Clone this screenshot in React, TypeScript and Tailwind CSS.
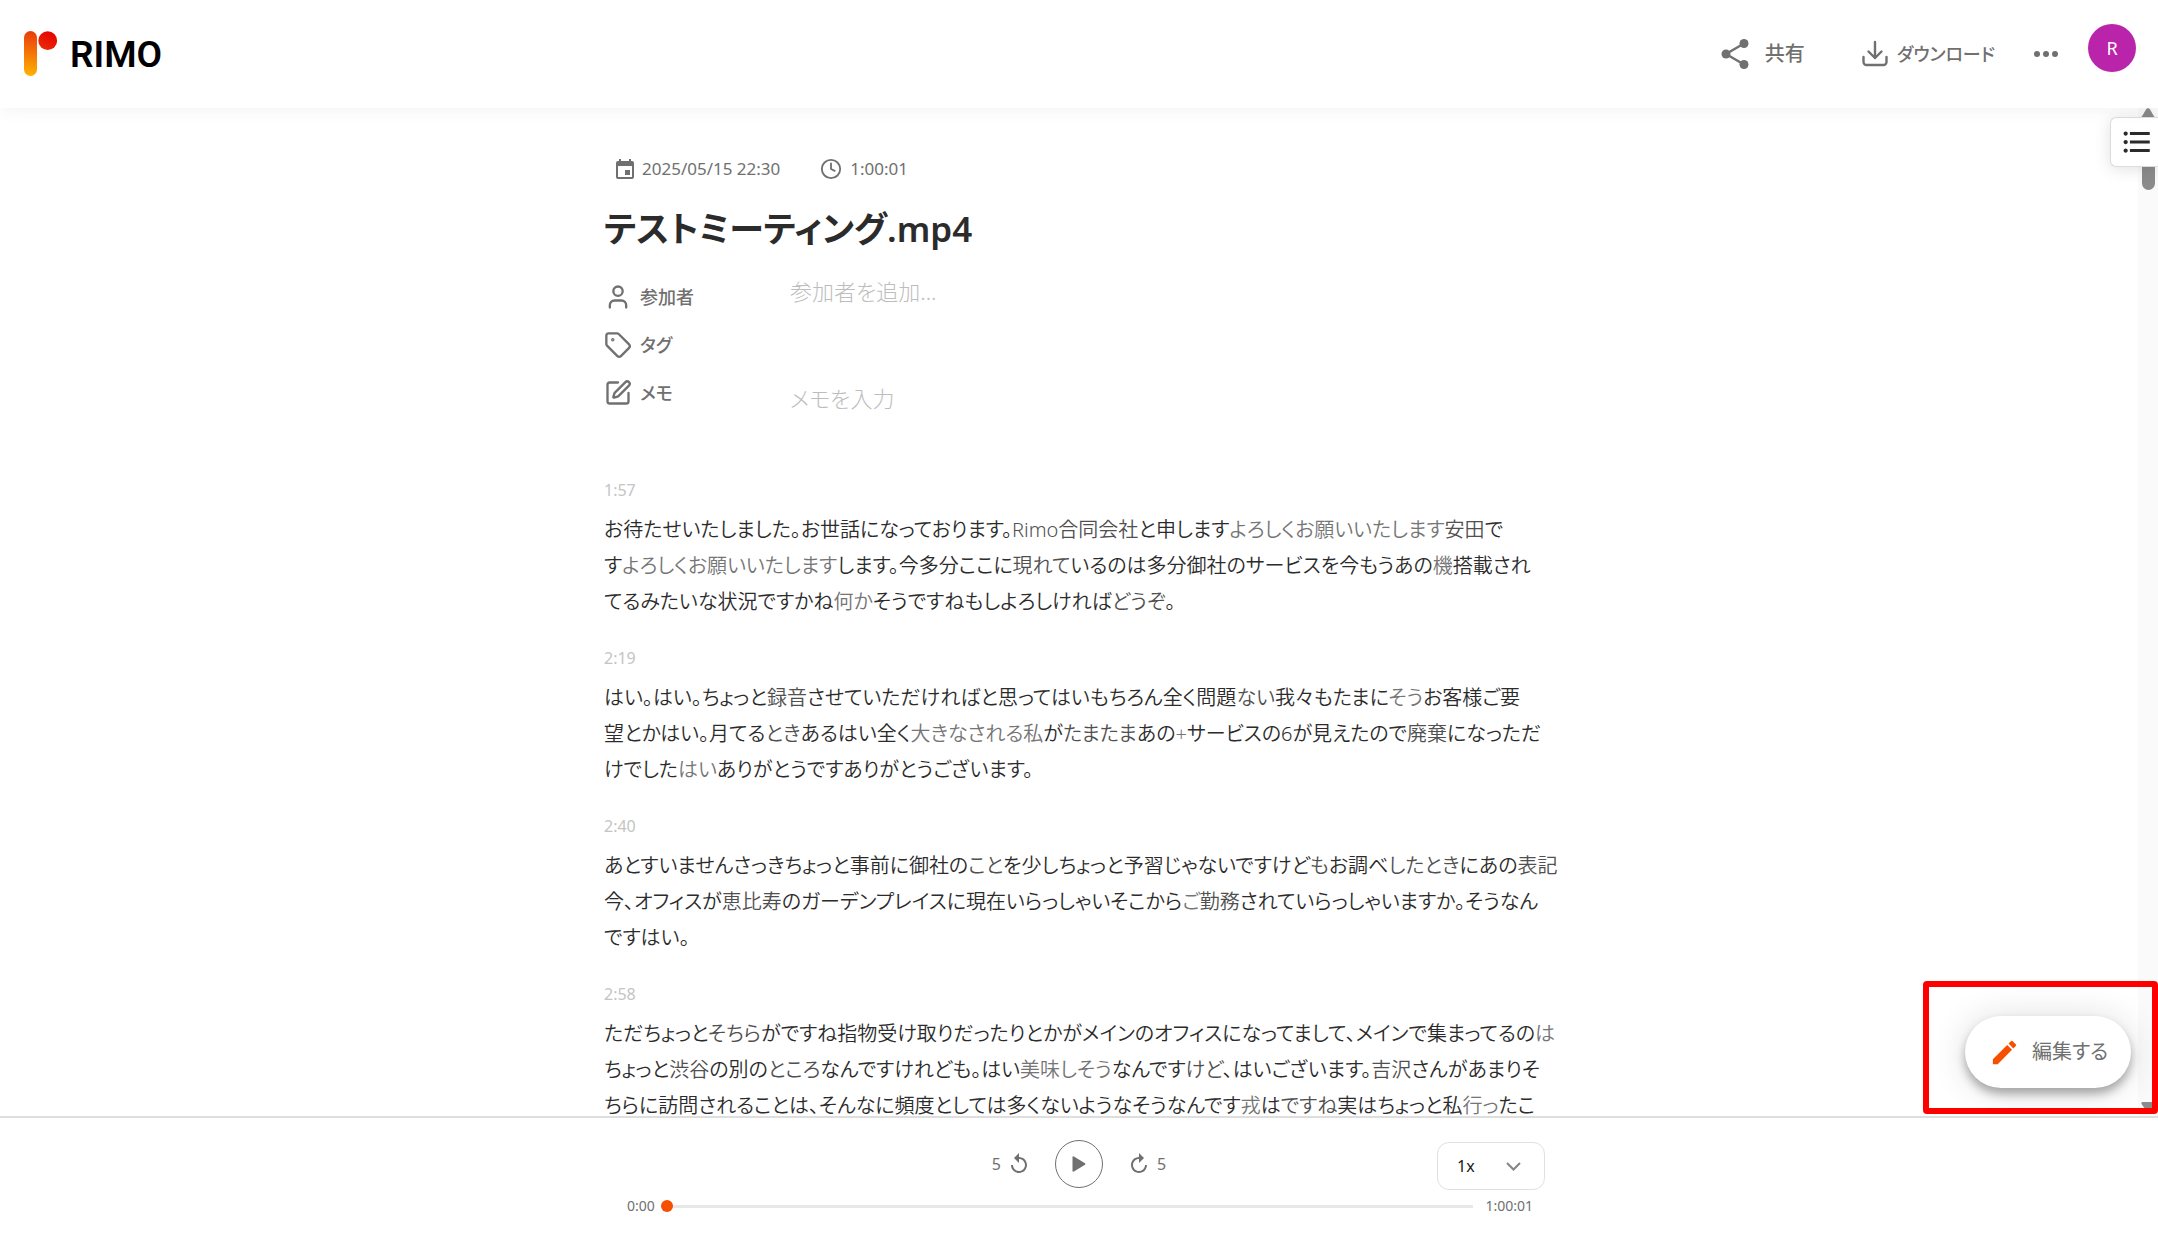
import React from "react";
import { Clock, SquarePen, Tag, User } from "lucide-react";
import { MdEdit, MdFormatListBulleted, MdReplay } from "react-icons/md";

/* Transcript markup: plain text is high confidence, {..} medium, <..> low. */
const transcript = [
  {
    time: "1:57",
    lines: [
      "お待たせいたしました。お世話になっております。{Rimo合同会社}と申します<よろしくお願いいたします>{安田}で",
      "す<よろしくお願いいたします>します。今多分ここに{現れて}いるのは多分御社のサービスを今もうあの<機>搭載され",
      "てるみたいな状況ですかね<何か>そうですねもしよろしければ{どうぞ}。",
    ],
  },
  {
    time: "2:19",
    lines: [
      "はい。はい。ちょっと{録音}させていただければと思ってはいもちろん全く問題{ない}我々もたまに<そう>お客様ご要",
      "望とかはい。月てる{とき}あるはい全く<大きなされる私>が{たまたま}あの<+>サービスの6が見えたので{廃棄}になっただ",
      "けでした<はい>ありがとうですありがとうございます。",
    ],
  },
  {
    time: "2:40",
    lines: [
      "あとすいませんさっきちょっと事前に御社の{こと}を少しちょっと予習じゃないですけど{も}お調べ{したとき}にあの{表記}",
      "今、オフィスが{恵比寿}のガーデンプレイスに現在いらっしゃいそこから<ご>{勤務}されていらっしゃいますか。そうなん",
      "ですはい。",
    ],
  },
  {
    time: "2:58",
    lines: [
      "ただちょっと{そちら}がですね指物受け取りだったりとかがメインのオフィスになってまして、メインで集まってるの<は>",
      "ちょっと{渋谷}の別の{ところ}なんですけれども。はい<美味しそう>なんです{けど}、はいございます。{吉沢}さんがあまりそ",
      "ちらに訪問されることは、そんなに頻度としては多くないようなそうなんです<戎>は{ですね}実はちょっと私<行っ>たこ",
    ],
  },
];

function TranscriptLine({ text }: { text: string }) {
  const parts = text.split(/(\{[^}]*\}|<[^>]*>)/).filter(Boolean);
  return (
    <span className="block whitespace-nowrap">
      {parts.map((part, i) => {
        if (part[0] === "{")
          return <span key={i} className="text-[#505050]">{part.slice(1, -1)}</span>;
        if (part[0] === "<")
          return <span key={i} className="text-[#757575]">{part.slice(1, -1)}</span>;
        return <span key={i}>{part}</span>;
      })}
    </span>
  );
}

function Logo() {
  return (
    <a href="#home" aria-label="RIMO" className="flex items-center gap-3 text-black">
      <svg width="34" height="46" viewBox="0 0 34 46" aria-hidden="true">
        <defs>
          <linearGradient id="stem" gradientUnits="userSpaceOnUse" x1="10" y1="0" x2="3" y2="46">
            <stop offset="0" stopColor="#e93a0c" />
            <stop offset="1" stopColor="#ffb600" />
          </linearGradient>
          <linearGradient id="dot" x1="0.8" y1="0" x2="0.2" y2="1">
            <stop offset="0" stopColor="#e60000" />
            <stop offset="1" stopColor="#ea2c08" />
          </linearGradient>
        </defs>
        <rect x="0" y="0" width="13" height="45" rx="6.500" fill="url(#stem)" />
        <circle cx="23.700" cy="9.700" r="9.400" fill="url(#dot)" />
      </svg>
      <span className="font-[Roboto] text-[37px] leading-none font-semibold">RIMO</span>
    </a>
  );
}

function ShareIcon() {
  return (
    <svg width="28" height="30" viewBox="0 0 28 30" fill="currentColor" aria-hidden="true">
      <path d="M23 4.500 5 15l18 10.500" fill="none" stroke="currentColor" strokeWidth="2.400" />
      <circle cx="23" cy="4.500" r="4.500" />
      <circle cx="5" cy="15" r="4.500" />
      <circle cx="23" cy="25.500" r="4.500" />
    </svg>
  );
}

function CalendarIcon() {
  return (
    <svg width="18" height="20" viewBox="0 0 18 20" fill="currentColor" aria-hidden="true">
      <path fillRule="evenodd" d="M3 0h2v2h8V0h2v2h1a2 2 0 0 1 2 2v14a2 2 0 0 1-2 2H2a2 2 0 0 1-2-2V4a2 2 0 0 1 2-2h1zM2 7v11h14V7z" />
      <path d="M9 11h5v5H9z" />
    </svg>
  );
}

export default function App() {
  return (
    <div className="flex h-screen flex-col overflow-hidden bg-white font-['Noto_Sans','Noto_Sans_CJK_JP',sans-serif] text-[#2b2b2b] [font-feature-settings:'palt']">
      <header className="relative z-10 flex h-[108px] shrink-0 items-center justify-between bg-white pr-[22px] pl-6 text-[#707070] shadow-[0_2px_16px_rgba(0,0,0,0.05)]">
        <Logo />
        <div className="flex items-center">
          <button type="button" className="flex items-center gap-4 text-xl font-medium">
            <ShareIcon />
            <span>共有</span>
          </button>
          <button type="button" className="ml-14 flex items-center gap-2 text-lg font-medium">
            <svg width="28" height="28" viewBox="0 0 28 28" fill="none" stroke="currentColor" strokeWidth="2.400" strokeLinecap="round" strokeLinejoin="round" aria-hidden="true">
              <path d="M14 2v16M7.500 11.500 14 18l6.500-6.500M2.500 17v5a3 3 0 0 0 3 3h17a3 3 0 0 0 3-3v-5" />
            </svg>
            <span>ダウンロード</span>
          </button>
          <button type="button" aria-label="その他" className="ml-[38px]">
            <svg width="26" height="6" viewBox="0 0 26 6" fill="currentColor" aria-hidden="true">
              <circle cx="4" cy="3" r="3" />
              <circle cx="13" cy="3" r="3" />
              <circle cx="22" cy="3" r="3" />
            </svg>
          </button>
          <button type="button" className="mb-3 ml-[29px] flex size-12 items-center justify-center rounded-full bg-[#b924ab] text-lg text-white">
            R
          </button>
        </div>
      </header>

      <main className="relative min-h-0 flex-1 overflow-hidden pr-5">
        <div className="mx-auto max-w-[930px] pt-[49px]">
          <div className="flex h-6 items-center text-[17px] text-[#707070]">
            <span className="ml-3 flex items-center gap-2">
              <CalendarIcon />
              2025/05/15 22:30
            </span>
            <span className="ml-10 flex items-center gap-2">
              <Clock size={22} strokeWidth={2} />
              1:00:01
            </span>
          </div>
          <h1 className="mt-6 text-[35px] leading-[48px] font-semibold">テストミーティング.mp4</h1>

          <div className="mt-5 text-lg text-[#707070]">
            <div className="flex h-12 items-center">
              <label htmlFor="members" className="flex w-[186px] items-center gap-2 font-medium">
                <User size={28} strokeWidth={2} />
                参加者
              </label>
              <input id="members" placeholder="参加者を追加..." className="mb-3 min-w-0 flex-1 text-[22px] font-light text-[#2b2b2b] outline-none placeholder:text-[#bdbdbd]" />
            </div>
            <div className="flex h-12 items-center gap-2 font-medium">
              <Tag size={28} strokeWidth={2} />
              タグ
            </div>
            <div className="flex h-12 items-center">
              <label htmlFor="memo" className="flex w-[186px] items-center gap-2 font-medium">
                <SquarePen size={28} strokeWidth={2} />
                メモ
              </label>
              <input id="memo" placeholder="メモを入力" className="mt-[10px] min-w-0 flex-1 text-[22px] font-light text-[#2b2b2b] outline-none placeholder:text-[#bdbdbd]" />
            </div>
          </div>

          <div className="mt-[61px] flex flex-col gap-[26px]">
            {transcript.map((entry) => (
              <section key={entry.time}>
                <time className="block text-base text-[#c4c4c4]">{entry.time}</time>
                <p className="mt-[10px] text-xl leading-9 font-[350]">
                  {entry.lines.map((line) => (
                    <TranscriptLine key={line} text={line} />
                  ))}
                </p>
              </section>
            ))}
          </div>
        </div>

        <div className="absolute inset-y-0 right-0 flex w-5 flex-col items-center justify-between bg-[#fafafa]" aria-hidden="true">
          <div className="flex flex-col items-center">
            <svg width="14" height="10" viewBox="0 0 14 10"><path d="M5 1.500q2-3 4 0L14 10H0z" fill="#8b8b8b" /></svg>
            <div className="h-[72px] w-[13px] rounded-b-full bg-[#8b8b8b]" />
          </div>
          <svg width="14" height="14" viewBox="0 0 14 14"><path d="M1 0h12q1 1 .5 2L8.500 9q-1.500 2-3 0L.5 2Q0 1 1 0z" fill="#8b8b8b" /></svg>
        </div>
        <button type="button" aria-label="目次" className="absolute top-[9px] right-0 flex h-[50px] w-12 items-center justify-center rounded-l-md border border-r-0 border-[#dcdcdc] bg-white pl-1 shadow-[0_2px_16px_rgba(0,0,0,0.12)]">
          <MdFormatListBulleted size={34} />
        </button>
        <div className="absolute right-0 bottom-[2px] flex h-[133px] w-[235px] items-center justify-end rounded-sm border-[6px] border-[#ff0000] pt-[9px] pr-[21px]">
          <button type="button" className="flex h-[72px] w-[166px] items-center gap-3 rounded-full bg-white pl-6 text-xl font-normal text-[#707070] shadow-[0_6px_10px_rgba(0,0,0,0.3),0_2px_36px_rgba(0,0,0,0.14)]">
            <MdEdit size={31} className="text-[#f64f00]" />
            編集する
          </button>
        </div>
      </main>

      <footer className="h-[118px] shrink-0 border-t-2 border-[#dedede] bg-white text-[#707070]">
        <div className="mx-auto max-w-[932px] pt-5">
          <div className="grid h-12 grid-cols-[1fr_auto_1fr] items-center text-base">
            <span />
            <div className="flex items-center gap-6">
              <button type="button" aria-label="5秒戻る" className="flex items-center gap-1.5">
                5
                <MdReplay size={24} />
              </button>
              <button type="button" aria-label="再生" className="flex size-12 items-center justify-center rounded-full border border-[#707070]">
                <svg width="14" height="16" viewBox="0 0 14 16" aria-hidden="true"><path d="M1.500.300 13 7.200q1 .8 0 1.600L1.500 15.700Q.5 16 .5 15V1Q.5 0 1.500.300z" fill="#707070" /></svg>
              </button>
              <button type="button" aria-label="5秒進む" className="flex items-center gap-1.5">
                <MdReplay size={24} className="-scale-x-100" />
                5
              </button>
            </div>
            <div className="relative mt-1 justify-self-end">
              <select aria-label="再生速度" className="h-12 w-[108px] appearance-none rounded-xl border border-[#e0e0e0] bg-white pl-[19px] text-base text-[#202020]">
                <option>1x</option>
              </select>
              <svg className="pointer-events-none absolute top-5 right-6" width="15" height="9" viewBox="0 0 15 9" fill="none" stroke="#858585" strokeWidth="2" aria-hidden="true"><path d="M1 1l6.500 6.500L14 1" /></svg>
            </div>
          </div>
          <div className="mt-2 flex h-6 items-center pr-3 pl-[14px] text-sm">
            <span>0:00</span>
            <input type="range" min={0} max={3601} defaultValue={0} aria-label="再生位置" className="mx-[6px] h-[3px] min-w-0 flex-1 appearance-none bg-[#e8e8e8] [&::-webkit-slider-thumb]:size-3 [&::-webkit-slider-thumb]:appearance-none [&::-webkit-slider-thumb]:rounded-full [&::-webkit-slider-thumb]:bg-[#f64f00]" />
            <span className="ml-[6px]">1:00:01</span>
          </div>
        </div>
      </footer>
    </div>
  );
}
